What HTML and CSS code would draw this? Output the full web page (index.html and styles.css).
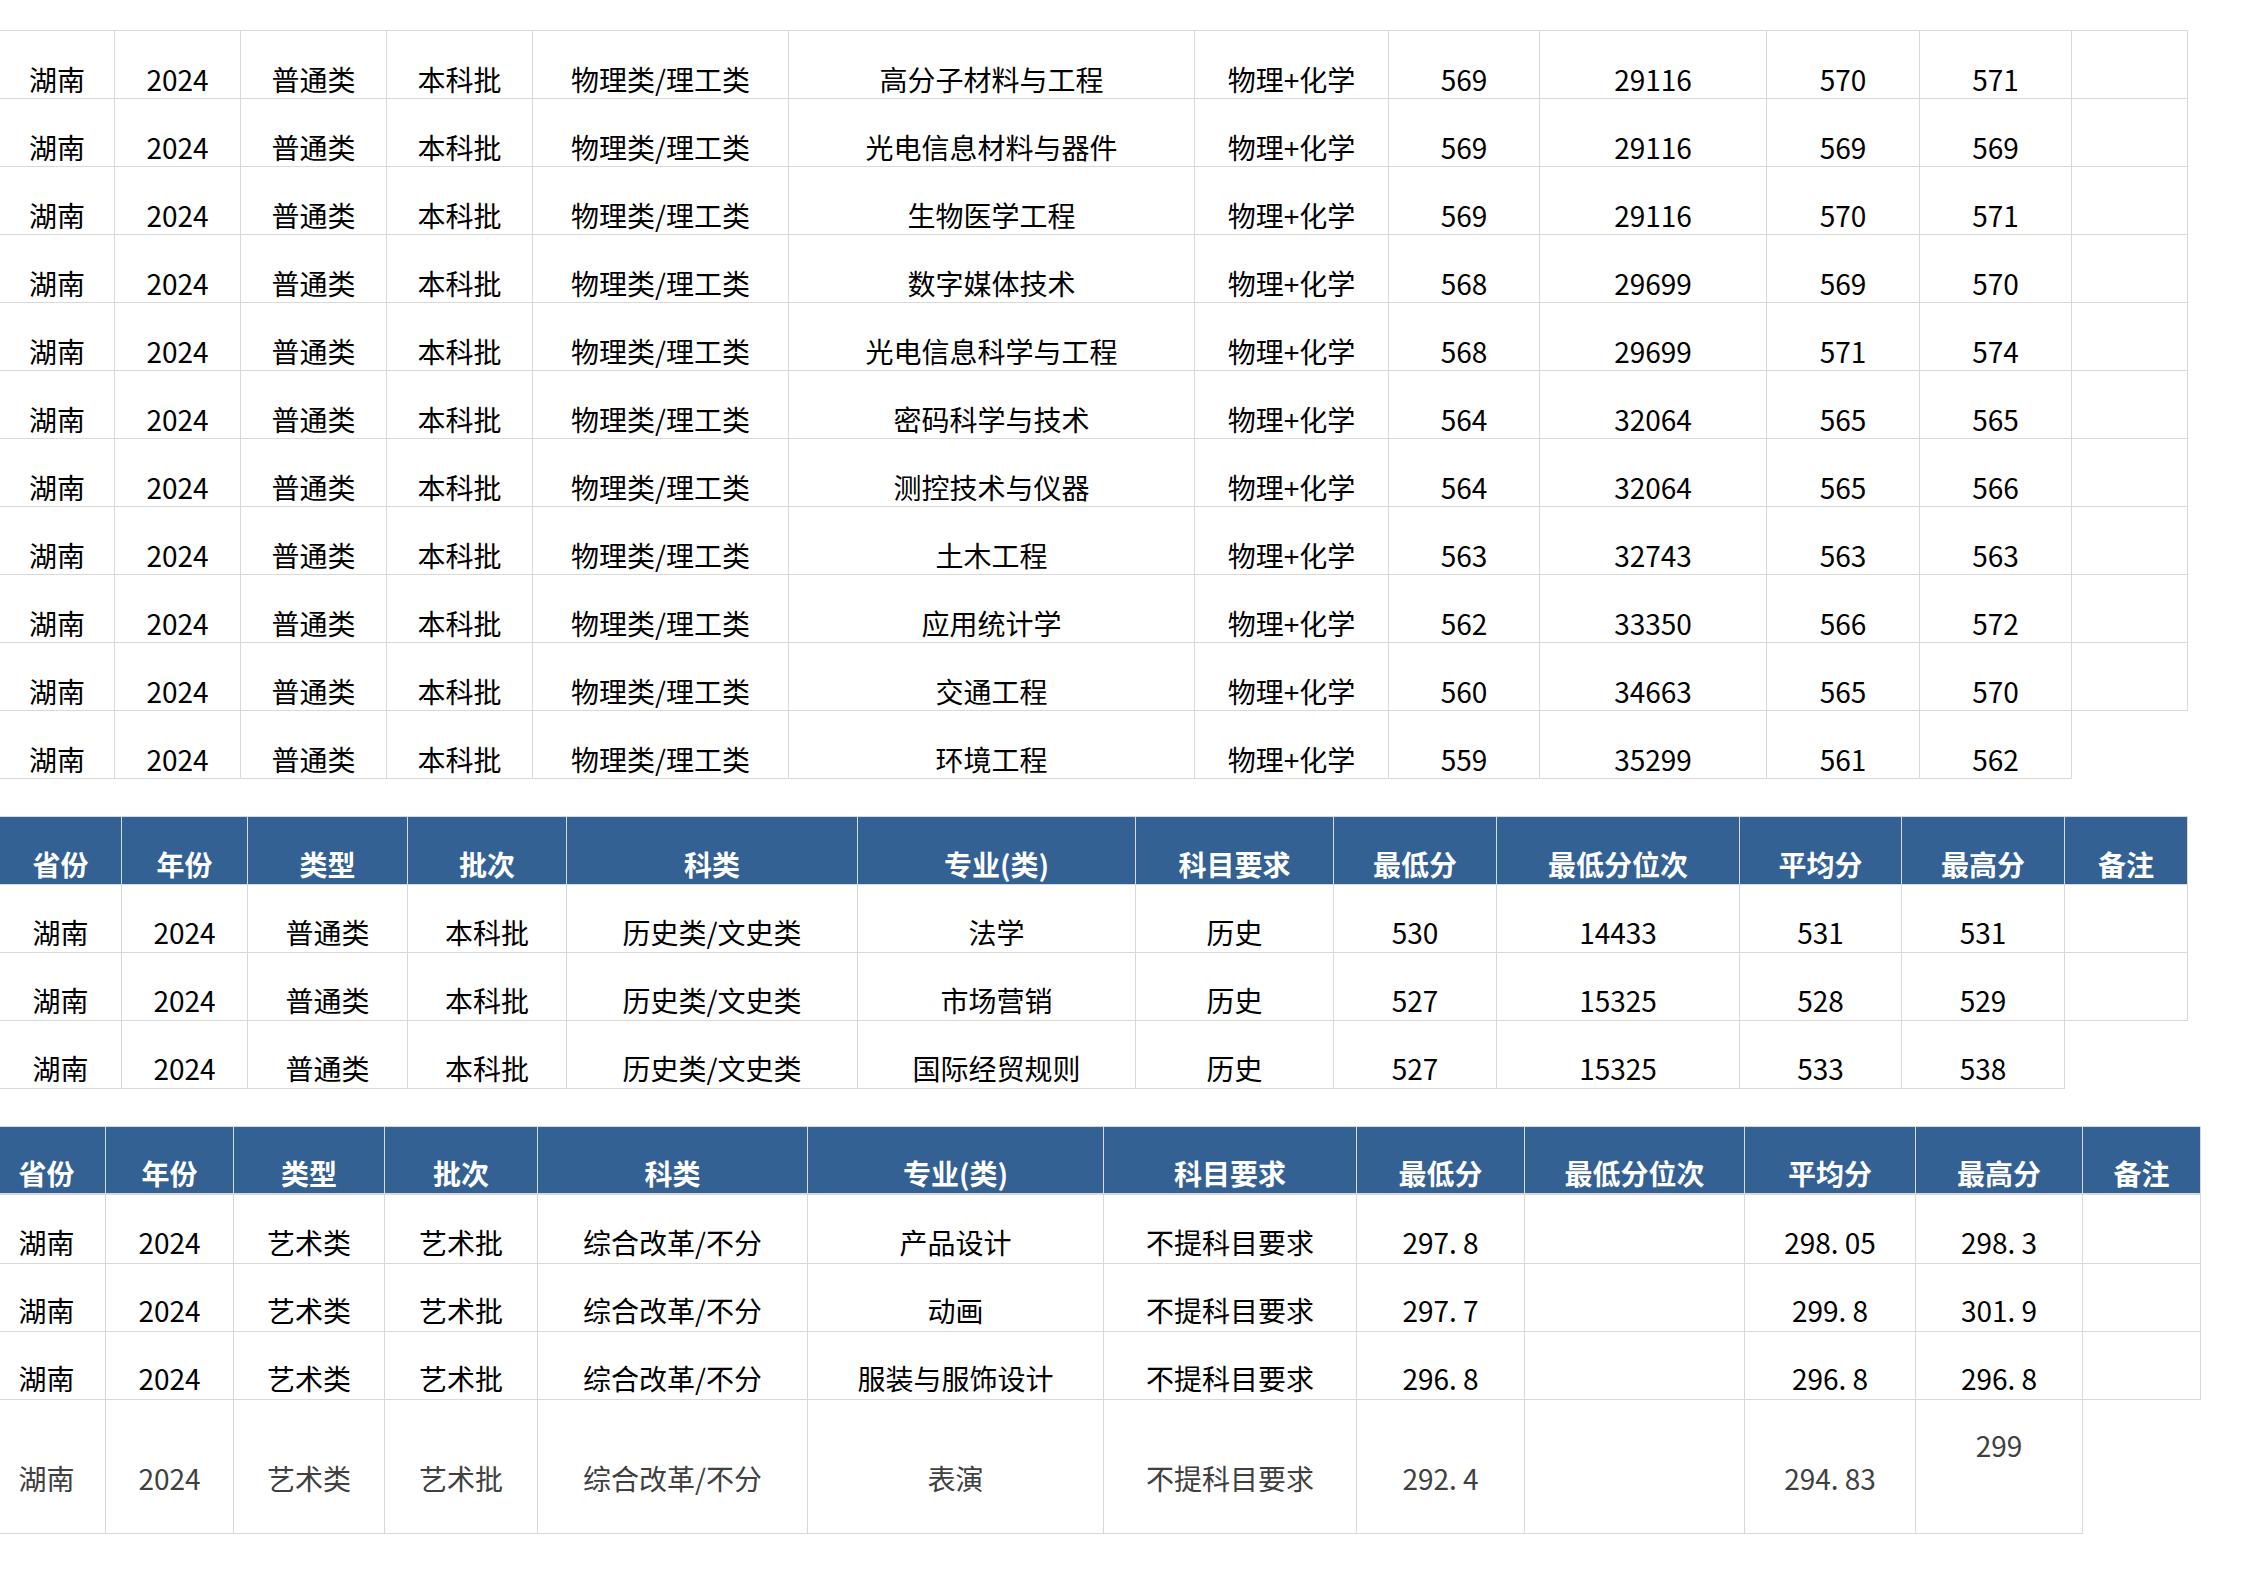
FILE: index.html
```html
<!DOCTYPE html>
<html lang="zh-CN">
<head>
<meta charset="utf-8">
<title>湖南 2024 录取分数</title>
<link rel="stylesheet" href="styles.css">
</head>
<body>
<table class="grid t1">
  <colgroup><col class="a1"><col class="a2"><col class="a3"><col class="a4"><col class="a5"><col class="a6"><col class="a7"><col class="a8"><col class="a9"><col class="a10"><col class="a11"><col class="a12"></colgroup>
  <tbody>
    <tr><td>湖南</td><td>2024</td><td>普通类</td><td>本科批</td><td>物理类/理工类</td><td>高分子材料与工程</td><td>物理+化学</td><td>569</td><td>29116</td><td>570</td><td>571</td><td></td></tr>
    <tr><td>湖南</td><td>2024</td><td>普通类</td><td>本科批</td><td>物理类/理工类</td><td>光电信息材料与器件</td><td>物理+化学</td><td>569</td><td>29116</td><td>569</td><td>569</td><td></td></tr>
    <tr><td>湖南</td><td>2024</td><td>普通类</td><td>本科批</td><td>物理类/理工类</td><td>生物医学工程</td><td>物理+化学</td><td>569</td><td>29116</td><td>570</td><td>571</td><td></td></tr>
    <tr><td>湖南</td><td>2024</td><td>普通类</td><td>本科批</td><td>物理类/理工类</td><td>数字媒体技术</td><td>物理+化学</td><td>568</td><td>29699</td><td>569</td><td>570</td><td></td></tr>
    <tr><td>湖南</td><td>2024</td><td>普通类</td><td>本科批</td><td>物理类/理工类</td><td>光电信息科学与工程</td><td>物理+化学</td><td>568</td><td>29699</td><td>571</td><td>574</td><td></td></tr>
    <tr><td>湖南</td><td>2024</td><td>普通类</td><td>本科批</td><td>物理类/理工类</td><td>密码科学与技术</td><td>物理+化学</td><td>564</td><td>32064</td><td>565</td><td>565</td><td></td></tr>
    <tr><td>湖南</td><td>2024</td><td>普通类</td><td>本科批</td><td>物理类/理工类</td><td>测控技术与仪器</td><td>物理+化学</td><td>564</td><td>32064</td><td>565</td><td>566</td><td></td></tr>
    <tr><td>湖南</td><td>2024</td><td>普通类</td><td>本科批</td><td>物理类/理工类</td><td>土木工程</td><td>物理+化学</td><td>563</td><td>32743</td><td>563</td><td>563</td><td></td></tr>
    <tr><td>湖南</td><td>2024</td><td>普通类</td><td>本科批</td><td>物理类/理工类</td><td>应用统计学</td><td>物理+化学</td><td>562</td><td>33350</td><td>566</td><td>572</td><td></td></tr>
    <tr><td>湖南</td><td>2024</td><td>普通类</td><td>本科批</td><td>物理类/理工类</td><td>交通工程</td><td>物理+化学</td><td>560</td><td>34663</td><td>565</td><td>570</td><td></td></tr>
    <tr><td>湖南</td><td>2024</td><td>普通类</td><td>本科批</td><td>物理类/理工类</td><td>环境工程</td><td>物理+化学</td><td>559</td><td>35299</td><td>561</td><td>562</td><td class="open"></td></tr>
  </tbody>
</table>

<table class="grid t2">
  <colgroup><col class="b1"><col class="b2"><col class="b3"><col class="b4"><col class="b5"><col class="b6"><col class="b7"><col class="b8"><col class="b9"><col class="b10"><col class="b11"><col class="b12"></colgroup>
  <thead>
    <tr><th>省份</th><th>年份</th><th>类型</th><th>批次</th><th>科类</th><th>专业(类)</th><th>科目要求</th><th>最低分</th><th>最低分位次</th><th>平均分</th><th>最高分</th><th>备注</th></tr>
  </thead>
  <tbody>
    <tr><td>湖南</td><td>2024</td><td>普通类</td><td>本科批</td><td>历史类/文史类</td><td>法学</td><td>历史</td><td>530</td><td>14433</td><td>531</td><td>531</td><td></td></tr>
    <tr><td>湖南</td><td>2024</td><td>普通类</td><td>本科批</td><td>历史类/文史类</td><td>市场营销</td><td>历史</td><td>527</td><td>15325</td><td>528</td><td>529</td><td></td></tr>
    <tr><td>湖南</td><td>2024</td><td>普通类</td><td>本科批</td><td>历史类/文史类</td><td>国际经贸规则</td><td>历史</td><td>527</td><td>15325</td><td>533</td><td>538</td><td class="open"></td></tr>
  </tbody>
</table>

<table class="grid t3">
  <colgroup><col class="d1"><col class="d2"><col class="d3"><col class="d4"><col class="d5"><col class="d6"><col class="d7"><col class="d8"><col class="d9"><col class="d10"><col class="d11"><col class="d12"></colgroup>
  <thead>
    <tr><th class="first">省份</th><th>年份</th><th>类型</th><th>批次</th><th>科类</th><th>专业(类)</th><th>科目要求</th><th>最低分</th><th>最低分位次</th><th>平均分</th><th>最高分</th><th>备注</th></tr>
  </thead>
  <tbody>
    <tr><td class="first">湖南</td><td>2024</td><td>艺术类</td><td>艺术批</td><td>综合改革/不分</td><td>产品设计</td><td>不提科目要求</td><td>297<span class="pt">.</span>8</td><td></td><td>298<span class="pt">.</span>05</td><td>298<span class="pt">.</span>3</td><td></td></tr>
    <tr><td class="first">湖南</td><td>2024</td><td>艺术类</td><td>艺术批</td><td>综合改革/不分</td><td>动画</td><td>不提科目要求</td><td>297<span class="pt">.</span>7</td><td></td><td>299<span class="pt">.</span>8</td><td>301<span class="pt">.</span>9</td><td></td></tr>
    <tr><td class="first">湖南</td><td>2024</td><td>艺术类</td><td>艺术批</td><td>综合改革/不分</td><td>服装与服饰设计</td><td>不提科目要求</td><td>296<span class="pt">.</span>8</td><td></td><td>296<span class="pt">.</span>8</td><td>296<span class="pt">.</span>8</td><td></td></tr>
    <tr class="tall"><td class="first">湖南</td><td>2024</td><td>艺术类</td><td>艺术批</td><td>综合改革/不分</td><td>表演</td><td>不提科目要求</td><td>292<span class="pt">.</span>4</td><td></td><td>294<span class="pt">.</span>83</td><td class="raised">299</td><td class="open"></td></tr>
  </tbody>
</table>
</body>
</html>
```

FILE: styles.css
```css
html, body {
  margin: 0;
  padding: 0;
  background: #ffffff;
}

body {
  font-family: "Noto Sans CJK SC", "Noto Sans", sans-serif;
  font-size: 28px;
  color: #000000;
}

.grid {
  table-layout: fixed;
  border-collapse: separate;
  border-spacing: 0;
  border-top: 1px solid #d9d9d9;
}

.grid td,
.grid th {
  box-sizing: border-box;
  padding: 0 0 2px 0;
  border-right: 1px solid #d9d9d9;
  border-bottom: 1px solid #d9d9d9;
  text-align: center;
  vertical-align: bottom;
  line-height: 34px;
  white-space: nowrap;
  overflow: visible;
}

.grid tr {
  height: 68px;
}

.grid th {
  background: #336194;
  color: #ffffff;
  font-weight: 700;
  padding-bottom: 3px;
}

.grid td.open {
  border-right: none;
  border-bottom: none;
}

/* table 1 */
.t1 {
  width: 2188px;
  margin-top: 30px;
}
.a1 { width: 115px; }
.a2 { width: 126px; }
.a3 { width: 146px; }
.a4 { width: 146px; }
.a5 { width: 256px; }
.a6 { width: 406px; }
.a7 { width: 194px; }
.a8 { width: 151px; }
.a9 { width: 227px; }
.a10 { width: 153px; }
.a11 { width: 152px; }
.a12 { width: 116px; }

/* table 2 */
.t2 {
  width: 2188px;
  margin-top: 37px;
}
.t2 td {
  padding-bottom: 3px;
}
.b1 { width: 122px; }
.b2 { width: 126px; }
.b3 { width: 160px; }
.b4 { width: 159px; }
.b5 { width: 291px; }
.b6 { width: 278px; }
.b7 { width: 198px; }
.b8 { width: 163px; }
.b9 { width: 243px; }
.b10 { width: 162px; }
.b11 { width: 163px; }
.b12 { width: 123px; }

/* table 3 */
.t3 {
  width: 2201px;
  margin-top: 37px;
}
.t3 td {
  padding-bottom: 4px;
}
.d1 { width: 106px; }
.d2 { width: 128px; }
.d3 { width: 151px; }
.d4 { width: 153px; }
.d5 { width: 270px; }
.d6 { width: 296px; }
.d7 { width: 253px; }
.d8 { width: 168px; }
.d9 { width: 220px; }
.d10 { width: 171px; }
.d11 { width: 167px; }
.d12 { width: 118px; }

.t3 thead th {
  border-bottom: 2px solid #d9d9d9;
}

.t3 tbody tr:first-child {
  height: 69px;
}

.t3 .first {
  padding-right: 12px;
}

.t3 tr.tall {
  height: 134px;
}

.t3 tr.tall td {
  color: #404040;
  padding-bottom: 38px;
}

.t3 tr.tall td.raised {
  padding-bottom: 71px;
}

.pt {
  margin-right: 0.22em;
}
```
